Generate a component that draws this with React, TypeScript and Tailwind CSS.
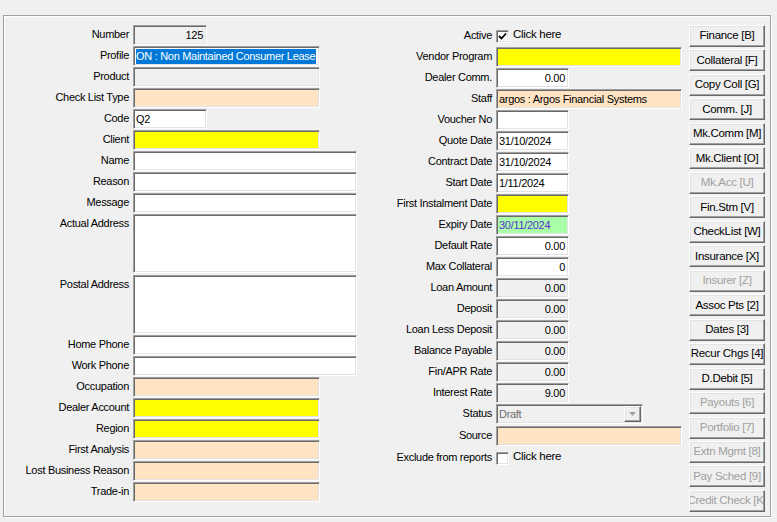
import React from 'react';

const sunken =
  'border border-t-[#a0a0a0] border-l-[#a0a0a0] border-b-white border-r-white shadow-[inset_1px_1px_0_#696969,inset_-1px_-1px_0_#e3e3e3]';
const raised =
  'border border-t-white border-l-white border-b-[#696969] border-r-[#696969] shadow-[inset_-1px_-1px_0_#a0a0a0,inset_1px_1px_0_#e3e3e3]';

interface FieldProps {
  w: string;
  bg?: string;
  h?: string;
  right?: boolean;
  color?: string;
  children?: React.ReactNode;
}

function Field({ w, bg = 'bg-white', h = 'h-[20px]', right, color = 'text-black', children }: FieldProps) {
  return (
    <div
      className={`${w} ${h} ${bg} ${sunken} ${color} flex shrink-0 items-center overflow-hidden whitespace-nowrap px-[2px] ${
        right ? 'justify-end pr-[3px]' : ''
      }`}
    >
      {children}
    </div>
  );
}

function Row({ label, labelW, children, tall }: { label: string; labelW: string; children: React.ReactNode; tall?: boolean }) {
  return (
    <div className={`flex gap-[4px] ${tall ? 'items-start' : 'items-center'}`}>
      <div className={`${labelW} shrink-0 text-right whitespace-nowrap ${tall ? 'pt-[1px]' : 'pb-[2px]'}`}>{label}</div>
      {children}
    </div>
  );
}

function CheckBox({ checked }: { checked?: boolean }) {
  return (
    <div className={`w-[13px] h-[13px] bg-white ${sunken} flex items-center justify-center`}>
      {checked && (
        <svg width="9" height="9" viewBox="0 0 9 9">
          <path d="M1 4 L3.5 6.5 L8 1.5" stroke="#000" strokeWidth="1.8" fill="none" />
        </svg>
      )}
    </div>
  );
}

const buttons: [string, boolean][] = [
  ['Finance [B]', true],
  ['Collateral [F]', true],
  ['Copy Coll [G]', true],
  ['Comm. [J]', true],
  ['Mk.Comm [M]', true],
  ['Mk.Client [O]', true],
  ['Mk.Acc [U]', false],
  ['Fin.Stm [V]', true],
  ['CheckList [W]', true],
  ['Insurance [X]', true],
  ['Insurer [Z]', false],
  ['Assoc Pts [2]', true],
  ['Dates [3]', true],
  ['Recur Chgs [4]', true],
  ['D.Debit [5]', true],
  ['Payouts [6]', false],
  ['Portfolio [7]', false],
  ['Extn Mgmt [8]', false],
  ['Pay Sched [9]', false],
  ['Credit Check [K]', false],
];

const peach = 'bg-[#ffe4c4]';
const yellow = 'bg-[#ffff00]';
const gray = 'bg-[#f0f0f0]';

export default function App() {
  const L = 'w-[125px]';
  const C = 'w-[135px]';
  return (
    <div className="w-[777px] h-[522px] bg-[#f0f0f0] pt-[15px] pl-[3px] font-['Liberation_Sans',Arial,sans-serif] text-[11px] tracking-[-0.3px] text-black overflow-hidden">
      <div className="w-[768px] h-[502px] border border-[#a0a0a0] shadow-[inset_1px_1px_0_#ffffff,1px_1px_0_#ffffff] flex pt-[9px]">
        {/* left column */}
        <div className="w-[353px] flex flex-col gap-[1px]">
          <Row label="Number" labelW={L}>
            <Field w="w-[74px]" bg={gray} right>125</Field>
          </Row>
          <Row label="Profile" labelW={L}>
            <Field w="w-[187px]">
              <span className="bg-[#0078d7] text-white leading-[15px] pr-[1px]">ON : Non Maintained Consumer Lease</span>
            </Field>
          </Row>
          <Row label="Product" labelW={L}>
            <Field w="w-[187px]" bg={gray} />
          </Row>
          <Row label="Check List Type" labelW={L}>
            <Field w="w-[187px]" bg={peach} />
          </Row>
          <Row label="Code" labelW={L}>
            <Field w="w-[74px]">Q2</Field>
          </Row>
          <Row label="Client" labelW={L}>
            <Field w="w-[187px]" bg={yellow} />
          </Row>
          <Row label="Name" labelW={L}>
            <Field w="w-[224px]" />
          </Row>
          <Row label="Reason" labelW={L}>
            <Field w="w-[224px]" />
          </Row>
          <Row label="Message" labelW={L}>
            <Field w="w-[224px]" />
          </Row>
          <div className="mb-[1px]">
            <Row label="Actual Address" labelW={L} tall>
              <Field w="w-[224px]" h="h-[59px]" />
            </Row>
          </div>
          <Row label="Postal Address" labelW={L} tall>
            <Field w="w-[224px]" h="h-[59px]" />
          </Row>
          <Row label="Home Phone" labelW={L}>
            <Field w="w-[224px]" />
          </Row>
          <Row label="Work Phone" labelW={L}>
            <Field w="w-[224px]" />
          </Row>
          <Row label="Occupation" labelW={L}>
            <Field w="w-[187px]" bg={peach} />
          </Row>
          <Row label="Dealer Account" labelW={L}>
            <Field w="w-[187px]" bg={yellow} />
          </Row>
          <Row label="Region" labelW={L}>
            <Field w="w-[187px]" bg={yellow} />
          </Row>
          <Row label="First Analysis" labelW={L}>
            <Field w="w-[187px]" bg={peach} />
          </Row>
          <Row label="Lost Business Reason" labelW={L}>
            <Field w="w-[187px]" bg={peach} />
          </Row>
          <Row label="Trade-in" labelW={L}>
            <Field w="w-[187px]" bg={peach} />
          </Row>
        </div>

        {/* centre column */}
        <div className="w-[325px] flex flex-col gap-[1px] pt-[1px]">
          <Row label="Active" labelW={C}>
            <div className="h-[20px] flex items-center gap-[4px]">
              <CheckBox checked />
              <span className="pb-[2px] text-[11.5px]">Click here</span>
            </div>
          </Row>
          <Row label="Vendor Program" labelW={C}>
            <Field w="w-[186px]" bg={yellow} />
          </Row>
          <Row label="Dealer Comm." labelW={C}>
            <Field w="w-[73px]" right>0.00</Field>
          </Row>
          <Row label="Staff" labelW={C}>
            <Field w="w-[186px]" bg={peach}>argos : Argos Financial Systems</Field>
          </Row>
          <Row label="Voucher No" labelW={C}>
            <Field w="w-[73px]" />
          </Row>
          <Row label="Quote Date" labelW={C}>
            <Field w="w-[73px]">31/10/2024</Field>
          </Row>
          <Row label="Contract Date" labelW={C}>
            <Field w="w-[73px]">31/10/2024</Field>
          </Row>
          <Row label="Start Date" labelW={C}>
            <Field w="w-[73px]">1/11/2024</Field>
          </Row>
          <Row label="First Instalment Date" labelW={C}>
            <Field w="w-[73px]" bg={yellow} />
          </Row>
          <Row label="Expiry Date" labelW={C}>
            <Field w="w-[73px]" bg="bg-[#a8ffa8]" color="text-[#5a2fd0]">30/11/2024</Field>
          </Row>
          <Row label="Default Rate" labelW={C}>
            <Field w="w-[73px]" right>0.00</Field>
          </Row>
          <Row label="Max Collateral" labelW={C}>
            <Field w="w-[73px]" right>0</Field>
          </Row>
          <Row label="Loan Amount" labelW={C}>
            <Field w="w-[73px]" bg={gray} right>0.00</Field>
          </Row>
          <Row label="Deposit" labelW={C}>
            <Field w="w-[73px]" bg={gray} right>0.00</Field>
          </Row>
          <Row label="Loan Less Deposit" labelW={C}>
            <Field w="w-[73px]" bg={gray} right>0.00</Field>
          </Row>
          <Row label="Balance Payable" labelW={C}>
            <Field w="w-[73px]" bg={gray} right>0.00</Field>
          </Row>
          <Row label="Fin/APR Rate" labelW={C}>
            <Field w="w-[73px]" bg={gray} right>0.00</Field>
          </Row>
          <Row label="Interest Rate" labelW={C}>
            <Field w="w-[73px]" bg={gray} right>9.00</Field>
          </Row>
          <div className="mb-[1px]">
            <Row label="Status" labelW={C}>
              <div className={`w-[147px] h-[20px] ${gray} ${sunken} flex items-center justify-between pl-[2px] pr-[1px] text-[#6d6d6d]`}>
                <span>Draft</span>
                <div className={`w-[17px] h-[16px] ${raised} bg-[#f0f0f0] flex items-center justify-center`}>
                  <svg width="7" height="4" viewBox="0 0 7 4">
                    <path d="M0 0 H7 L3.5 4 Z" fill="#a0a0a0" />
                  </svg>
                </div>
              </div>
            </Row>
          </div>
          <Row label="Source" labelW={C}>
            <Field w="w-[186px]" bg={peach} />
          </Row>
          <Row label="Exclude from reports" labelW={C}>
            <div className="h-[22px] flex items-center gap-[4px]">
              <CheckBox />
              <span className="pb-[2px] text-[11.5px]">Click here</span>
            </div>
          </Row>
        </div>

        {/* buttons */}
        <div className="ml-[7px] w-[76px] h-[487px] flex flex-col justify-between text-[11.5px]">
          {buttons.map(([label, enabled]) => (
            <div
              key={label}
              className={`h-[22px] w-[76px] ${raised} bg-[#f0f0f0] flex items-center justify-center overflow-hidden whitespace-nowrap ${
                enabled ? 'text-black' : 'text-[#a0a0a0]'
              }`}
            >
              {label}
            </div>
          ))}
        </div>
      </div>
    </div>
  );
}
